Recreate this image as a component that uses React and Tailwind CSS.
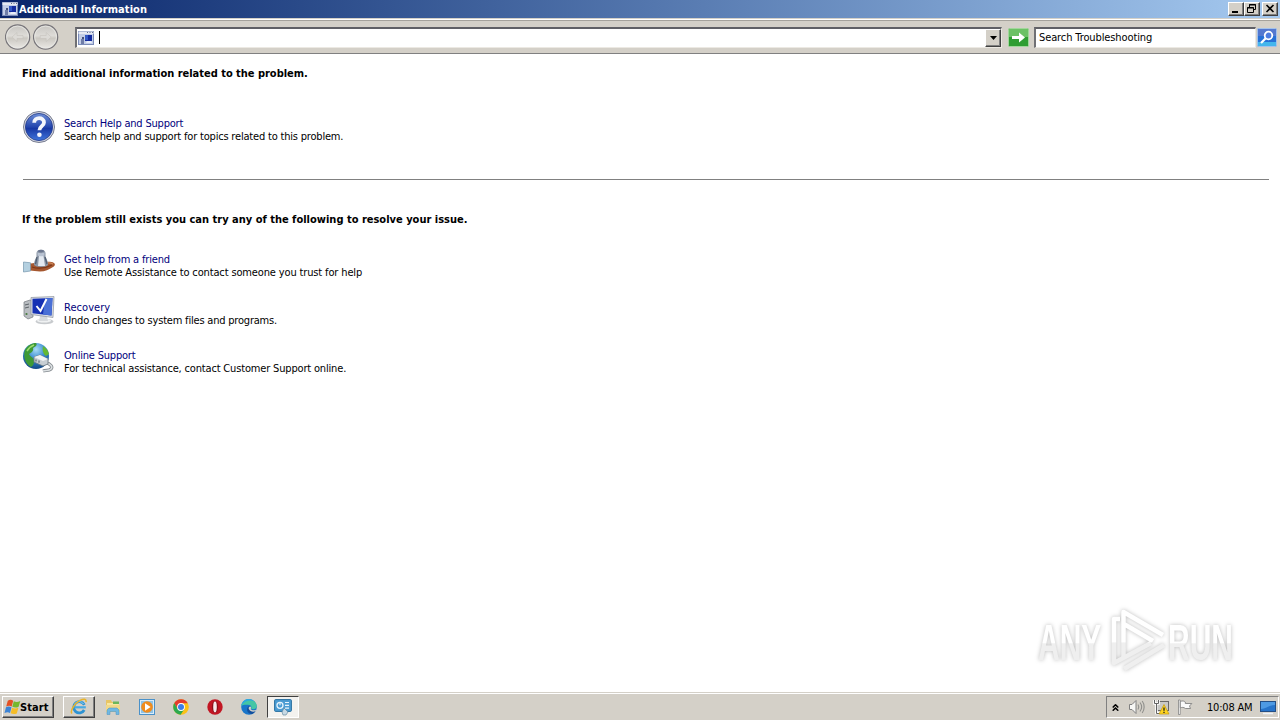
import { ChevronsUp } from 'lucide-react';

const raised = 'bg-[#d4d0c8] border border-t-white border-l-white border-r-[#404040] border-b-[#404040] shadow-[inset_-1px_-1px_0_#808080]';

function PanelIcon({ className }) {
  return (
    <svg className={className} viewBox="0 0 16 14">
      <rect x="0" y="0" width="16" height="14" fill="#7c8cb8" />
      <rect x="0.5" y="0.5" width="15" height="2.5" fill="#e6e9f2" />
      <path d="M9 1.5h1M11.5 1.5h1M14 1.5h1" stroke="#66708a" />
      <rect x="1" y="3" width="14" height="10" fill="#c3cde6" />
      <rect x="7" y="4" width="7" height="6" fill="#142c9e" />
      <rect x="7" y="4" width="3" height="5" fill="#3358c4" />
      <path d="M8 12h6l-1-2H9z" fill="#e9eefa" />
      <rect x="3" y="8" width="3" height="5" fill="#6f7da8" />
      <rect x="4" y="6" width="2" height="2" fill="#44507c" />
    </svg>
  );
}

function NavButton({ flip }) {
  return (
    <svg className="w-[26px] h-[26px]" viewBox="0 0 26 26">
      <defs>
        <linearGradient id="nav" x1="0" y1="0" x2="0" y2="1">
          <stop offset="0" stopColor="#c6c4c0" />
          <stop offset="0.45" stopColor="#dedcd8" />
          <stop offset="0.55" stopColor="#cbc8c2" />
          <stop offset="1" stopColor="#eceae6" />
        </linearGradient>
      </defs>
      <circle cx="12.6" cy="13" r="12.1" fill="url(#nav)" stroke="#77757a" strokeWidth="1.2" />
      <circle cx="12.6" cy="13" r="10.9" fill="none" stroke="#e9e8e5" strokeWidth="0.8" />
      <path
        d="M7 13l5-4.500v3h6v3h-6v3z"
        transform={flip ? 'rotate(180 12.6 13)' : undefined}
        fill="#dcdad6"
        stroke="#c6c3be"
        strokeWidth="0.6"
      />
    </svg>
  );
}

function HelpIcon() {
  return (
    <svg className="w-8 h-8" viewBox="0 0 32 32">
      <defs>
        <linearGradient id="help" x1="0" y1="0" x2="0" y2="1">
          <stop offset="0" stopColor="#6f8fd6" />
          <stop offset="0.5" stopColor="#2446ae" />
          <stop offset="0.55" stopColor="#1838a4" />
          <stop offset="1" stopColor="#3f76dc" />
        </linearGradient>
      </defs>
      <circle cx="16" cy="16" r="15.5" fill="#d3d6df" stroke="#777c90" />
      <circle cx="16" cy="16" r="13.6" fill="url(#help)" stroke="#21398c" strokeWidth="0.8" />
      <path d="M11.2 11.800c0-6.200 9.800-6 9.800-.4 0 3.700-4.600 3.800-4.600 7.800" fill="none" stroke="#f4f6fc" strokeWidth="3.800" />
      <circle cx="16.4" cy="23.800" r="2.300" fill="#f4f6fc" />
    </svg>
  );
}

function FriendIcon() {
  return (
    <svg className="w-8 h-8" viewBox="0 0 32 32">
      <g transform="translate(0 1)">
        <path d="M6 16c4-1.500 8-1 12-1 4-1 9-2 13 0 1.500 1 1 3-1 4-4 2.500-8 4.500-13 4.500-4 0-7-1-10-1z" fill="#a5572f" />
        <path d="M9 19c6 2 14 1 20-2" fill="none" stroke="#7c3719" strokeWidth="1.2" />
        <path d="M22 15.500c3-1 5-1 8 .5" fill="none" stroke="#cf8a5d" strokeWidth="1.3" />
        <path d="M.5 14l7 .8V23l-7 1z" fill="#b4d0e0" stroke="#7697ae" strokeWidth="0.7" />
        <path d="M13.500 5c0-4.500 9-4.500 9 0v4c1.500 2 2.500 5 2.500 8-2 2.500-12 2.500-14 0 0-3 1-6 2.500-8z" fill="#8a95a5" />
        <path d="M16 8h4.500l1.500 10h-7z" fill="#e3e9f0" />
        <path d="M14.500 4c1 1.600 6 1.600 7 0v3.500c-1 1-6 1-7 0z" fill="#b9c3d2" />
        <path d="M22 9l2 7M14 9l-1.500 7" stroke="#526073" strokeWidth="1.3" />
        <ellipse cx="18" cy="3" rx="3" ry="1.2" fill="#6d7890" />
      </g>
    </svg>
  );
}

function RecoveryIcon() {
  return (
    <svg className="w-8 h-8" viewBox="0 0 32 32">
      <g transform="translate(0 1)">
        <path d="M1 6l6-2 3 1v16l-5 2-4-3z" fill="#b9bdc1" stroke="#74797e" strokeWidth="0.7" />
        <path d="M2 9l4-1M2 12l4-1" stroke="#5c6268" />
        <circle cx="3.500" cy="18" r="1.1" fill="#477a3f" />
        <ellipse cx="21.500" cy="25.500" rx="9" ry="2.800" fill="#c7cacd" />
        <ellipse cx="21" cy="24.700" rx="7" ry="1.9" fill="#eff1f2" />
        <path d="M17 20h7l1 5h-9z" fill="#d7dadd" />
        <path d="M8 1.500l23-1-1 21-22-3z" fill="#d9dde4" stroke="#8e949d" strokeWidth="0.7" />
        <path d="M9.500 2.800l20-.8-1 17.500L9.500 17.200z" fill="#1631b4" />
        <path d="M22 2.300l7.500-.3-1 17.500-8.500-1z" fill="#4a70d6" />
        <path d="M13.500 10l4 5L23.500 3" fill="none" stroke="#fff" strokeWidth="2" />
      </g>
    </svg>
  );
}

function OnlineIcon() {
  return (
    <svg className="w-8 h-8" viewBox="0 0 32 32">
      <defs>
        <radialGradient id="globe" cx="0.5" cy="0.25" r="0.8">
          <stop offset="0" stopColor="#a9dcf5" />
          <stop offset="0.45" stopColor="#3a8cd0" />
          <stop offset="1" stopColor="#0d3f7f" />
        </radialGradient>
      </defs>
      <circle cx="13" cy="13" r="13" fill="url(#globe)" />
      <path d="M2 7c3-5 7-7 11-7 2 2-1 4-3 5 1 3-2 5-4 6 1 3 5 3 5 7 0 3-1 5-3 6C2 21 0 13 2 7z" fill="#3f9a35" />
      <path d="M20 3c3 2 5 4 6 8l-3 2c-3-2-4-6-3-10z" fill="#64b832" />
      <path d="M4 8c2-3 4-5 7-6" fill="none" stroke="#9bdc70" strokeWidth="1.5" />
      <path d="M22 19c6 2 8 5 6 7s-5 1-8 2" fill="none" stroke="#858b90" strokeWidth="3.200" />
      <path d="M22 19c6 2 8 5 6 7s-5 1-8 2" fill="none" stroke="#dce0e2" strokeWidth="1.600" />
      <path d="M11 14l6-2 8 4v5l-5 2-9-4z" fill="#c7ced3" stroke="#6c7880" strokeWidth="0.8" />
      <path d="M11 14l6-2 8 4-5 2z" fill="#f0f3f5" />
      <path d="M13 16.500v2M16 17.500v2.3" stroke="#57636d" strokeWidth="1.1" />
    </svg>
  );
}

function IeIcon() {
  return (
    <svg className="w-[18px] h-[18px]" viewBox="0 0 18 18">
      <path d="M14.300 6.800A5.600 5.600 0 1 0 14.200 12" fill="none" stroke="#2e93d3" strokeWidth="2.800" />
      <path d="M4.500 8.200h11.300v2.200H4.500z" fill="#48aae4" />
      <path d="M4.500 6.500c1-2 2.500-2.900 4.500-2.900s3.500.9 4.500 2.400" fill="none" stroke="#8fd4f5" strokeWidth="1" />
      <path d="M2 15.6C-.5 13 5 5 10 2.400c4-2.100 6.700-1.500 6 1.800" fill="none" stroke="#e9b42c" strokeWidth="1.500" />
    </svg>
  );
}

function ExplorerIcon() {
  return (
    <svg className="w-4 h-4" viewBox="0 0 16 16">
      <path d="M1 1h5l1 2h7v9H1z" fill="#e8c564" />
      <path d="M2 4h12v9H2z" fill="#f8e7a0" />
      <path d="M8 2.500h6V5H8z" fill="#6db65b" />
      <path d="M1 6h14v7H1z" fill="#f1d889" />
      <path d="M2 15.500v-4.500l2-2h8l2 2v4.500h-3v-3H5v3z" fill="#70b8e2" stroke="#4890c0" strokeWidth="0.5" />
    </svg>
  );
}

function MediaIcon() {
  return (
    <svg className="w-4 h-4" viewBox="0 0 16 16">
      <rect x="0.5" y="0.5" width="15" height="15" fill="#d9ecf9" stroke="#4a91c9" />
      <rect x="2" y="2" width="12" height="12" fill="#8dc3e8" />
      <circle cx="8" cy="8" r="5.800" fill="#f08c1d" />
      <path d="M6 4.300v7.400L11.600 8z" fill="#fff" />
    </svg>
  );
}

function ChromeIcon() {
  return (
    <svg className="w-4 h-4" viewBox="0 0 16 16">
      <circle cx="8" cy="8" r="7.800" fill="#fbc116" />
      <path d="M1.250 4.100A7.800 7.800 0 0 1 14.800 4.200H8L4.600 10z" fill="#e33b2e" />
      <path d="M1.250 4.100A7.800 7.800 0 0 0 7.600 15.800L11.400 9.900H4.700z" fill="#2da94f" />
      <circle cx="8" cy="8" r="3.900" fill="#fff" />
      <circle cx="8" cy="8" r="3" fill="#3c7ee8" />
    </svg>
  );
}

function OperaIcon() {
  return (
    <svg className="w-4 h-4" viewBox="0 0 16 16">
      <circle cx="8" cy="8" r="7.700" fill="#c21623" />
      <ellipse cx="8" cy="8" rx="3.100" ry="6" fill="#87101a" />
      <ellipse cx="8" cy="8" rx="1.800" ry="5.400" fill="#f6e9e9" />
    </svg>
  );
}

function EdgeIcon() {
  return (
    <svg className="w-4 h-4" viewBox="0 0 16 16">
      <circle cx="8" cy="8" r="7.800" fill="#1975c9" />
      <path d="M.3 7C1.500-2 15-1.500 15.800 7c.2 3-3.300 3.800-5.800 2.800 1-1.300.3-4-3-4C4 5.500 1.300 6 .3 7z" fill="#45c6a5" />
      <path d="M.3 7C1-.5 9-2 13 2 8 .5 3 2 .3 7z" fill="#2ba9e0" />
      <path d="M9.500 10c-1 1.300 2 3 5.200 1.500-1 2-2.700 3.200-4 3.600C6 15 4.800 9.500 7.500 7.300c2 0 2.600 1.500 2 2.700z" fill="#124f9e" />
      <path d="M8 10.200c-.8-1.200 0-2.600 1.200-2.600 1.400.4 1 1.800.4 2.400 1 1.400 3.700 1.600 5.700.8l-.8 1.400C12 13.200 9 12.500 8 10.200z" fill="#d4d0c8" />
    </svg>
  );
}

function TroubleshootIcon() {
  return (
    <svg className="w-[18px] h-[17px]" viewBox="0 0 18 17">
      <rect x="0.6" y="0.6" width="16.800" height="11.800" rx="1" fill="#4b9cd3" stroke="#286f9f" />
      <circle cx="6" cy="6.300" r="3" fill="none" stroke="#e6f4fd" strokeWidth="1.300" />
      <path d="M6 6.300V3M11 3.500h4M11 6.300h4M11 9.100h4" stroke="#e6f4fd" strokeWidth="1.200" />
      <path d="M8 13l2-4 4 4-2 3H9z" fill="#c7d9e4" stroke="#577f98" strokeWidth="0.600" />
    </svg>
  );
}

function StartFlag() {
  return (
    <svg className="w-[17px] h-4 shrink-0" viewBox="0 0 17 16">
      <path d="M3.800 1.700c2-1.300 3.700-1.100 5.400 0L7.700 7.500c-1.700-1-3.500-.9-5.500 0z" fill="#e45124" />
      <path d="M9.800 2.200c2.200 1.200 4 1 6.500-.2l-1.700 5.700c-2.200 1.200-4.200 1-6.300 0z" fill="#76b82d" />
      <path d="M2 8.300c2-1 3.700-.8 5.500 0L6 14c-1.700-1-3.500-.8-5.500 0z" fill="#3b83d5" />
      <path d="M8.100 8.700c2.200 1.100 4 1 6.300 0l-1.600 5.700c-2.200 1-4.200.9-6.200-.1z" fill="#f5bd27" />
    </svg>
  );
}

function SpeakerIcon() {
  return (
    <svg className="w-[18px] h-4" viewBox="0 0 18 16" fill="none">
      <path d="M1.500 5.500h2.500l4-4v13l-4-4H1.500z" fill="#f7f7f5" stroke="#808080" />
      <path d="M10 5.500c1 1.500 1 3.500 0 5M12 3.500c2 2.700 2 6.300 0 9M14.200 2c2.600 3.500 2.600 8.500 0 12" stroke="#8f8f8c" strokeWidth="1.100" />
    </svg>
  );
}

function NetworkIcon() {
  return (
    <svg className="w-[17px] h-4" viewBox="0 0 17 16">
      <rect x="4.500" y="2.500" width="11" height="9" fill="#c9c9c6" stroke="#686868" />
      <path d="M1.500 1v3.500h4V1M3.500 4.500V14H7" fill="none" stroke="#fff" strokeWidth="2.600" />
      <path d="M1.500 1v3.500h4V1M3.500 4.500V14.500H7" fill="none" stroke="#646464" />
      <path d="M11 5.500l5 9.500H6z" fill="#ffd51f" stroke="#c39a0c" strokeWidth="0.700" />
      <path d="M11 8.500v3.300M11 12.800v1.300" stroke="#222" strokeWidth="1.300" />
    </svg>
  );
}

function FlagIcon() {
  return (
    <svg className="w-4 h-4" viewBox="0 0 16 16">
      <path d="M1.500 1v14.500h1.700V1z" fill="#fff" stroke="#777" strokeWidth="0.700" />
      <path d="M3.300 2.500c2-1 4-.5 5 .5v1.500h6.500L12.500 7l1 2.500h-5c-2-1.500-3.500-1.300-5.200-.6z" fill="#fafafa" stroke="#777" strokeWidth="0.800" />
    </svg>
  );
}

function DesktopIcon() {
  return (
    <svg className="w-4 h-[15px]" viewBox="0 0 16 15">
      <rect x="0.500" y="1.500" width="15" height="10" fill="#2774ca" stroke="#234e85" />
      <path d="M1 2h14v3C9 5 6 9 1 9z" fill="#4e9ae3" />
      <path d="M3 13.500h10" stroke="#eef3f8" strokeWidth="1.500" />
    </svg>
  );
}

function Watermark() {
  return (
    <svg className="absolute left-[1026px] top-[550px] w-[220px] h-[75px] drop-shadow-[0_0_2px_#bcbcbc]" viewBox="0 0 220 75">
      <defs>
        <linearGradient id="mark" x1="0" y1="17" x2="0" y2="57" gradientUnits="userSpaceOnUse">
          <stop offset="0.52" stopColor="#ffffff" />
          <stop offset="0.55" stopColor="#efefef" />
        </linearGradient>
        <linearGradient id="markText" x1="0" y1="-36" x2="0" y2="0" gradientUnits="userSpaceOnUse">
          <stop offset="0.52" stopColor="#ffffff" />
          <stop offset="0.55" stopColor="#efefef" />
        </linearGradient>
      </defs>
      <g fill="url(#markText)" fontFamily="'Liberation Sans', sans-serif" fontSize="50" fontWeight="bold">
        <text transform="translate(12 56) scale(0.6 1)">ANY</text>
        <text transform="translate(142 56) scale(0.6 1)">RUN</text>
      </g>
      <g fill="none" stroke="url(#mark)" strokeWidth="4.500" strokeLinejoin="round">
        <path d="M97.500 53V8L137 31M98 20l29 17" />
        <path d="M94 15h-6v44l37-20M98 65l40-24" />
      </g>
    </svg>
  );
}

const links = [
  { title: 'Get help from a friend', text: 'Use Remote Assistance to contact someone you trust for help', icon: FriendIcon, titleSpacing: 'tracking-[-0.17px]', textSpacing: 'tracking-[-0.14px]' },
  { title: 'Recovery', text: 'Undo changes to system files and programs.', icon: RecoveryIcon, titleSpacing: 'tracking-[0.05px]', textSpacing: 'tracking-[-0.2px]' },
  { title: 'Online Support', text: 'For technical assistance, contact Customer Support online.', icon: OnlineIcon, titleSpacing: 'tracking-[-0.2px]', textSpacing: 'tracking-[-0.17px]' },
];

function HelpLink({ title, text, icon: Icon, titleSpacing, textSpacing }) {
  return (
    <div className="flex h-8 ml-px gap-[9px]">
      <Icon />
      <div className="pt-[6px]">
        <a className={`block w-fit text-[#00007c] ${titleSpacing}`}>{title}</a>
        <p className={`w-fit ${textSpacing}`}>{text}</p>
      </div>
    </div>
  );
}

export default function App() {
  return (
    <div className="flex flex-col w-[1280px] h-[720px] overflow-hidden bg-white text-black text-[11px] leading-[13px] whitespace-nowrap [font-stretch:condensed] font-['DejaVu_Sans_Condensed','DejaVu_Sans',sans-serif]">
      {/* Title bar */}
      <div className="flex items-center h-[18px] pl-[2px] pr-[2px] bg-linear-to-r from-[#0a246a] to-[#a6caf0]">
        <PanelIcon className="w-4 h-[14px]" />
        <span className="ml-px text-white font-bold tracking-[0.08px]">Additional Information</span>
        <div className="flex ml-auto">
          <button className={`w-4 h-[14px] ${raised}`}>
            <svg className="w-[14px] h-3" viewBox="0 0 14 12"><path d="M3 9h6" stroke="#000" strokeWidth="2" /></svg>
          </button>
          <button className={`w-4 h-[14px] ${raised}`}>
            <svg className="w-[14px] h-3" viewBox="0 0 14 12" fill="none" stroke="#000">
              <path d="M4.500 4.500v-3h6v5h-2M4 2h7M2.500 4.500h6v5h-6zM2 5h7" />
            </svg>
          </button>
          <button className={`w-4 h-[14px] ml-[2px] ${raised}`}>
            <svg className="w-[14px] h-3" viewBox="0 0 14 12"><path d="M3.500 2l7 7M10.500 2l-7 7" stroke="#000" strokeWidth="1.600" /></svg>
          </button>
        </div>
      </div>

      {/* Navigation and address bar */}
      <div className="flex items-center h-9 pl-[5px] pr-[2px] pt-[3px] bg-[#d4d0c8] border-b border-[#808080] shadow-[inset_0_1px_0_#d4d0c8,inset_0_2px_0_#fff,inset_0_3px_0_#a5a29c]">
        <div className="flex gap-[2px]">
          <NavButton />
          <NavButton flip />
        </div>
        <div className="flex items-center w-[927px] h-[21px] ml-[16px] pl-[1px] shrink-0 bg-white border-t-2 border-l-2 border-t-[#606066] border-l-[#707074] border-r border-b border-r-[#ece9e3] border-b-[#ece9e3]">
          <PanelIcon className="w-4 h-[14px]" />
          <span className="w-px h-[13px] ml-[5px] bg-black" />
          <button className={`flex items-center justify-center w-4 h-[18px] ml-auto ${raised}`}>
            <svg className="w-[7px] h-1" viewBox="0 0 7 4"><path d="M0 0h7L3.500 4z" /></svg>
          </button>
        </div>
        <svg className="w-[21px] h-[19px] ml-[6px] shrink-0" viewBox="0 0 21 19">
          <rect x="0.500" y="0.500" width="20" height="18" rx="1" fill="#2f9d32" stroke="#a1d79b" />
          <path d="M1 1h19v8H1z" fill="#6cc165" />
          <path d="M4 8h7V4.500l6 5-6 5V11H4z" fill="#fff" />
        </svg>
        <div className="flex items-center w-[222px] h-[21px] ml-[5px] pl-[3px] shrink-0 bg-white border-t-2 border-l-2 border-t-[#606066] border-l-[#707074] border-r border-b border-[#ece9e3]">
          <span className="tracking-[-0.11px]">Search Troubleshooting</span>
        </div>
        <svg className="w-[20px] h-[19px] ml-[1px] shrink-0" viewBox="0 0 20 19">
          <rect x="0.500" y="0.500" width="19" height="18" rx="1" fill="#2770d6" stroke="#a3c2ec" />
          <path d="M1 1h18v7H1z" fill="#5478cf" />
          <path d="M1 14h18v4H1z" fill="#44b6ec" />
          <path d="M4 15l5-5" stroke="#fff" strokeWidth="2.300" />
          <circle cx="11.500" cy="7.500" r="3.800" fill="#4e7ce0" stroke="#fff" strokeWidth="1.800" />
        </svg>
      </div>

      {/* Help content */}
      <div className="relative h-[638px] pl-[22px] pr-[11px] pt-[13px]">
        <h1 className="w-fit font-bold tracking-[-0.02px]">Find additional information related to the problem.</h1>
        <div className="mt-[31px]">
          <HelpLink
            title="Search Help and Support"
            text="Search help and support for topics related to this problem."
            icon={HelpIcon}
            titleSpacing="tracking-[-0.2px]"
            textSpacing="tracking-[-0.19px]"
          />
        </div>
        <div className="h-px mt-[36px] ml-px bg-[#808080]" />
        <h2 className="w-fit mt-[33px] font-bold">If the problem still exists you can try any of the following to resolve your issue.</h2>
        <div className="flex flex-col gap-4 mt-[21px]">
          {links.map(link => (
            <HelpLink key={link.title} {...link} />
          ))}
        </div>
        <Watermark />
      </div>

      {/* Taskbar */}
      <div className="flex items-center h-7 pl-[2px] pr-[1px] pt-px bg-[#d4d0c8] border-t border-[#d4d0c8] shadow-[inset_0_1px_0_#fff]">
        <button className={`flex items-center w-[52px] h-[22px] pl-px ${raised}`}>
          <StartFlag />
          <span className="-ml-px font-bold tracking-[0.1px]">Start</span>
        </button>
        <button className={`flex items-center justify-center w-8 h-[22px] ml-[9px] ${raised}`}>
          <IeIcon />
        </button>
        <div className="flex items-center gap-[18px] ml-[10px]">
          <ExplorerIcon />
          <MediaIcon />
          <ChromeIcon />
          <OperaIcon />
          <EdgeIcon />
        </div>
        <button className="flex items-center justify-center w-8 h-[22px] ml-[10px] bg-[#f3f2ef] border border-t-[#404040] border-l-[#404040] border-r-white border-b-white">
          <TroubleshootIcon />
        </button>
        <div className="flex items-center w-[173px] h-[22px] ml-auto border border-t-[#808080] border-l-[#808080] border-r-white border-b-white">
          <ChevronsUp className="w-[11px] h-[11px] ml-[3px]" strokeWidth={3.5} />
          <div className="flex gap-[7px] ml-[7px]">
            <SpeakerIcon />
            <NetworkIcon />
            <FlagIcon />
          </div>
          <span className="ml-[14px] tracking-[-0.2px]">10:08 AM</span>
          <span className="ml-auto mr-[2px]"><DesktopIcon /></span>
        </div>
      </div>
    </div>
  );
}
